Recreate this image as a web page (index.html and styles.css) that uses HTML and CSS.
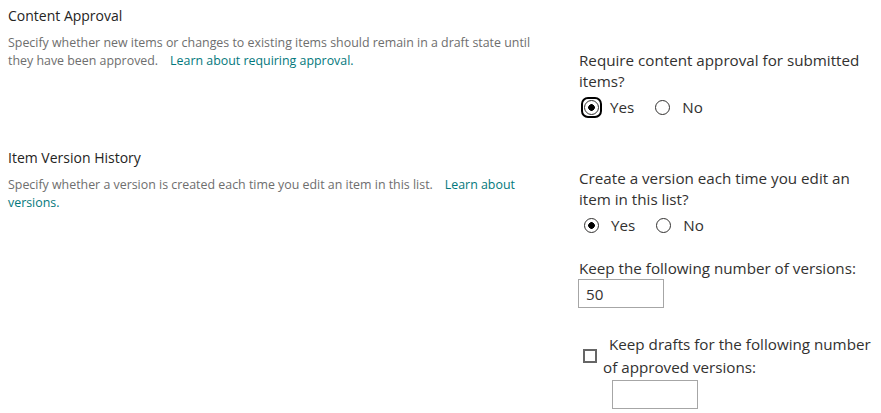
FILE: index.html
```html
<!DOCTYPE html>
<html lang="en">
<head>
    <meta charset="UTF-8">
    <meta name="viewport" content="width=device-width, initial-scale=1.0">
    <title>Versioning Settings</title>
    <link rel="stylesheet" href="styles.css">
</head>
<body>
    <div class="settings">
        <div class="section section-first">
            <div class="info">
                <h3>Content Approval</h3>
                <p class="desc">Specify whether new items or changes to existing items should remain in a draft state until they have been approved.<a class="learn" href="#">Learn about requiring approval.</a></p>
            </div>
            <div class="control control-first">
                <div class="question">Require content approval for submitted items?</div>
                <div class="choices">
                    <label class="choice">
                        <span class="focus-ring"><input type="radio" name="approval" checked></span>Yes
                    </label>
                    <label class="choice">
                        <input type="radio" name="approval">No
                    </label>
                </div>
            </div>
        </div>

        <div class="section">
            <div class="info">
                <h3>Item Version History</h3>
                <p class="desc">Specify whether a version is created each time you edit an item in this list.<a class="learn" href="#">Learn about versions.</a></p>
            </div>
            <div class="control">
                <div class="question">Create a version each time you edit an item in this list?</div>
                <div class="choices">
                    <label class="choice">
                        <input type="radio" name="versions" checked>Yes
                    </label>
                    <label class="choice">
                        <input type="radio" name="versions">No
                    </label>
                </div>

                <div class="field-label">Keep the following number of versions:</div>
                <input class="num-box" type="text" value="50">

                <div class="drafts">
                    <div class="drafts-check"><input type="checkbox" id="keepDrafts"></div>
                    <label class="drafts-label" for="keepDrafts">Keep drafts for the following number of approved versions:</label>
                    <div></div>
                    <div><input class="num-box num-box-drafts" type="text"></div>
                </div>
            </div>
        </div>
    </div>
</body>
</html>
```

FILE: styles.css
```css
body {
    margin: 0;
    font-family: "Segoe UI", "Open Sans", sans-serif;
    color: #323130;
    background-color: #fff;
}

.settings {
    padding-left: 8px;
}

.section {
    display: grid;
    grid-template-columns: 571px 1fr;
    padding-top: 26px;
}

.section-first {
    padding-top: 6px;
}

.info {
    padding-right: 36px;
}

.info h3 {
    margin: 0;
    font-size: 14px;
    font-weight: normal;
    line-height: 19px;
    color: #252423;
}

.desc {
    margin: 9px 0 0;
    font-size: 12.4px;
    line-height: 18px;
    color: #6e6e6e;
}

.learn {
    margin-left: 12px;
    color: #03787c;
    text-decoration: none;
}

.control {
    padding-top: 20px;
    font-size: 15.2px;
    line-height: 21px;
}

.control-first {
    padding-top: 44px;
}

.choices {
    display: flex;
    align-items: center;
    height: 30px;
}

.choice {
    display: inline-flex;
    align-items: center;
    margin-right: 16px;
}

.choice input[type="radio"] {
    appearance: none;
    box-sizing: border-box;
    width: 15px;
    height: 15px;
    margin: 0 12px 0 5px;
    border: 1px solid #323130;
    border-radius: 50%;
    background-color: #fff;
}

.choice input[type="radio"]:checked {
    background: radial-gradient(circle, #000 0 3px, #fff 3.6px);
}

.focus-ring {
    display: inline-flex;
    margin: 0 8px 0 2px;
    padding: 1px;
    border: 2.5px solid #000;
    border-radius: 7px;
}

.focus-ring input[type="radio"] {
    margin: 0;
}

.field-label {
    margin-top: 18px;
}

.num-box {
    display: block;
    box-sizing: border-box;
    width: 86px;
    height: 29px;
    margin: 0 0 0 -1px;
    padding: 0 7px;
    border: 1px solid #a6a6a6;
    font-family: inherit;
    font-size: 15.2px;
    color: #323130;
}

.num-box-drafts {
    margin: 1px 0 0 9px;
}

.drafts {
    display: grid;
    grid-template-columns: 24px 1fr;
    margin-top: 25px;
}

.drafts-check {
    display: flex;
    align-items: center;
}

.drafts-check input {
    appearance: none;
    box-sizing: border-box;
    width: 14px;
    height: 14px;
    margin: 0 0 0 4px;
    border: 2px solid #666;
    background-color: #fff;
}

.drafts-label {
    line-height: 23px;
    text-indent: 6px;
}
```
